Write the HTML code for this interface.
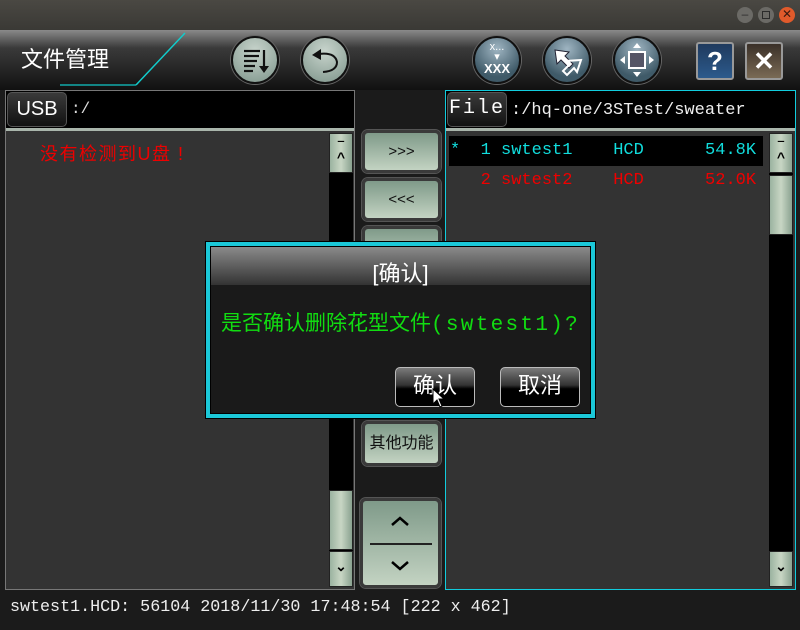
<!DOCTYPE html>
<html><head><meta charset="utf-8"><style>
*{margin:0;padding:0;box-sizing:border-box}
body{width:800px;height:630px;background:#1b1b1b;position:relative;overflow:hidden;font-family:"Liberation Sans","Noto Sans CJK SC",sans-serif}
.a{position:absolute}
.mono{font-family:"Liberation Mono","Noto Sans CJK SC",monospace}
.gbtn{position:absolute;border-radius:6px;background:linear-gradient(#7f9a89,#c3d3c2);border:3px solid #3a3a3a;box-shadow:0 0 0 1px #555;color:#111;text-align:center}
.sb{position:absolute;background:linear-gradient(90deg,#9bb3a0,#c8d6c4 50%,#8aa290);border:1px solid #222}
.circ{position:absolute;width:48px;height:48px;border-radius:50%;border:2px solid #111;box-shadow:0 0 0 1px #666}
.dbtn{position:absolute;border:1px solid #bbb;border-radius:5px;background:linear-gradient(#7a7a7a,#333 45%,#000 55%,#000);color:#fff;font-size:22px;text-align:center;line-height:36px}
</style></head><body>
<div class="a" style="left:0;top:0;width:800px;height:30px;background:linear-gradient(#4a4843,#3a3935)"></div>
<div class="a" style="left:737px;top:7px;width:16px;height:16px;border-radius:50%;background:#6b6a66;color:#2b2b2b;font-size:12px;text-align:center;line-height:15px">–</div>
<div class="a" style="left:758px;top:7px;width:16px;height:16px;border-radius:50%;background:#6b6a66"><div class="a" style="left:4px;top:4px;width:8px;height:8px;border:1px solid #2b2b2b"></div></div>
<div class="a" style="left:779px;top:7px;width:16px;height:16px;border-radius:50%;background:#e05a2b;color:#3a1a10;font-size:12px;text-align:center;line-height:15px">✕</div>
<div class="a" style="left:0;top:30px;width:800px;height:60px;background:linear-gradient(#8a8a8a,#3a3a3a 30%,#111 100%)"></div>
<div class="a" style="left:21px;top:42px;color:#fff;font-size:22px">文件管理</div>
<svg class="a" style="left:0;top:30px" width="200" height="60"><line x1="60" y1="55" x2="136" y2="55" stroke="#1aa" stroke-width="1.5"/><line x1="136" y1="55" x2="185" y2="3" stroke="#1cc" stroke-width="1.5"/></svg>
<div class="circ" style="left:231px;top:36px;background:radial-gradient(circle at 50% 30%,#c8d4cc,#7d948a)">
<svg width="44" height="44"><g stroke="#111" stroke-width="2.2"><line x1="11" y1="13" x2="27" y2="13"/><line x1="11" y1="18" x2="26" y2="18"/><line x1="11" y1="23" x2="24" y2="23"/><line x1="11" y1="28" x2="22" y2="28"/><line x1="11" y1="33" x2="20" y2="33"/><line x1="31" y1="12" x2="31" y2="30"/></g><path d="M26 28 L36 28 L31 35Z" fill="#111"/></svg></div>
<div class="circ" style="left:301px;top:36px;background:radial-gradient(circle at 50% 30%,#c8d4cc,#7d948a)">
<svg width="44" height="44"><path d="M16 16 Q32 14 34 24 Q34 33 20 34" fill="none" stroke="#111" stroke-width="2"/><path d="M9 17 L18 11 L18 22Z" fill="#111"/></svg></div>
<div class="circ" style="left:473px;top:36px;background:radial-gradient(circle at 50% 25%,#9fb5c2,#3f5a68 70%)"><div style="color:#fff;font-size:11px;text-align:center;margin-top:4px;line-height:10px">x...<br>▾</div><div style="color:#fff;font-size:13px;font-weight:bold;text-align:center;line-height:13px">XXX</div></div>
<div class="circ" style="left:543px;top:36px;background:radial-gradient(circle at 50% 25%,#9fb5c2,#3f5a68 70%)"><svg width="44" height="44"><path d="M10 12 L24 14 L20 18 L28 26 L24 30 L16 22 L12 26Z" fill="#fff" stroke="#223" /><path d="M36 22 L32 34 L29 30 L22 37 L18 33 L25 26 L21 23Z" fill="none" stroke="#fff" stroke-width="2"/></svg></div>
<div class="circ" style="left:613px;top:36px;background:radial-gradient(circle at 50% 25%,#9fb5c2,#3f5a68 70%)"><svg width="44" height="44"><rect x="14" y="14" width="16" height="16" fill="#556" stroke="#fff" stroke-width="2"/><path d="M22 5 L26 10 L18 10Z M22 39 L26 34 L18 34Z M5 22 L10 18 L10 26Z M39 22 L34 18 L34 26Z" fill="#fff"/></svg></div>
<div class="a" style="left:696px;top:42px;width:38px;height:38px;border:2px solid #999;border-radius:3px;background:linear-gradient(#1f3a5e,#2c5a8c);color:#fff;font-size:26px;font-weight:bold;text-align:center;line-height:34px">?</div>
<div class="a" style="left:745px;top:42px;width:38px;height:38px;border:2px solid #999;border-radius:3px;background:linear-gradient(#3a3028,#7a6a55);color:#fff;font-size:26px;font-weight:bold;text-align:center;line-height:34px">✕</div>
<div class="a" style="left:5px;top:90px;width:350px;height:500px;border:1px solid #777;background:#333"></div>
<div class="a" style="left:6px;top:91px;width:348px;height:37px;background:#000"></div>
<div class="a" style="left:6px;top:128px;width:348px;height:3px;background:#a9b5ab"></div>
<div class="a" style="left:7px;top:92px;width:60px;height:35px;border:1px solid #555;border-radius:5px;background:linear-gradient(#3a3a3a,#111);color:#fff;font-size:20px;text-align:center;line-height:32px">USB</div>
<div class="a mono" style="left:71px;top:100px;color:#ddd;font-size:16px">:/</div>
<div class="a" style="left:40px;top:140px;color:#e00;font-size:18px;letter-spacing:1.5px;white-space:pre">没有检测到U盘 !</div>
<div class="a" style="left:329px;top:172px;width:24px;height:415px;background:#000"></div>
<div class="sb" style="left:329px;top:133px;width:24px;height:40px"><div style="text-align:center;font-size:14px;font-weight:bold;margin-top:8px;line-height:10px">‾<br>^</div></div>
<div class="sb" style="left:329px;top:490px;width:24px;height:60px"></div>
<div class="sb" style="left:329px;top:551px;width:24px;height:36px"><div style="text-align:center;font-size:14px;margin-top:6px;font-weight:bold">⌄</div></div>
<div class="gbtn" style="left:362px;top:130px;width:79px;height:43px;line-height:37px;font-size:15px">&gt;&gt;&gt;</div>
<div class="gbtn" style="left:362px;top:178px;width:79px;height:43px;line-height:37px;font-size:15px">&lt;&lt;&lt;</div>
<div class="gbtn" style="left:362px;top:226px;width:79px;height:43px"></div>
<div class="gbtn" style="left:362px;top:421px;width:79px;height:45px;line-height:39px;font-size:16px">其他功能</div>
<div class="gbtn" style="left:360px;top:498px;width:81px;height:90px">
<svg width="75" height="84"><path d="M29 24 L37 17 L45 24" fill="none" stroke="#000" stroke-width="2.5"/><line x1="7" y1="43" x2="69" y2="43" stroke="#222" stroke-width="2"/><path d="M29 61 L37 68 L45 61" fill="none" stroke="#000" stroke-width="2.5"/></svg></div>
<div class="a" style="left:445px;top:90px;width:351px;height:500px;border:1px solid #1cd;background:#333"></div>
<div class="a" style="left:446px;top:91px;width:349px;height:37px;background:#000"></div>
<div class="a" style="left:446px;top:128px;width:349px;height:3px;background:#a9b5ab"></div>
<div class="a mono" style="left:447px;top:92px;width:60px;height:35px;border:1px solid #555;border-radius:5px;background:linear-gradient(#3a3a3a,#111);color:#fff;font-size:20px;text-align:center;line-height:32px;letter-spacing:2px">File</div>
<div class="a mono" style="left:511px;top:101px;color:#eee;font-size:17px">:/hq-one/3STest/sweater</div>
<div class="a" style="left:449px;top:136px;width:314px;height:30px;background:#000"></div>
<div class="a mono" style="left:450px;top:141px;color:#1dd;font-size:17px;white-space:pre">*  1 swtest1    HCD      54.8K</div>
<div class="a mono" style="left:450px;top:171px;color:#e00;font-size:17px;white-space:pre">   2 swtest2    HCD      52.0K</div>
<div class="a" style="left:769px;top:172px;width:24px;height:415px;background:#000"></div>
<div class="sb" style="left:769px;top:133px;width:24px;height:40px"><div style="text-align:center;font-size:14px;font-weight:bold;margin-top:8px;line-height:10px">‾<br>^</div></div>
<div class="sb" style="left:769px;top:175px;width:24px;height:60px"></div>
<div class="sb" style="left:769px;top:551px;width:24px;height:36px"><div style="text-align:center;font-size:14px;margin-top:6px;font-weight:bold">⌄</div></div>
<div class="a" style="left:205px;top:241px;width:391px;height:178px;background:#1bc8d8;border:1px solid #000"></div>
<div class="a" style="left:210px;top:246px;width:381px;height:168px;background:#1a1a1a;border:1px solid #000"></div>
<div class="a" style="left:211px;top:247px;width:379px;height:38px;background:linear-gradient(#8a8a8a,#333)"></div>
<div class="a" style="left:211px;top:256px;width:379px;text-align:center;color:#fff;font-size:22px">[确认]</div>
<div class="a" style="left:221px;top:307px;color:#1d1;font-size:21px;white-space:nowrap">是否确认删除花型文件<span class="mono" style="letter-spacing:2.3px">(swtest1)?</span></div>
<div class="dbtn" style="left:395px;top:367px;width:80px;height:40px">确认</div>
<div class="dbtn" style="left:500px;top:367px;width:80px;height:40px">取消</div>
<svg class="a" style="left:432px;top:388px" width="14" height="22"><path d="M1 1 L1 16 L5 12 L8 19 L10 18 L7 11 L12 11Z" fill="#fff" stroke="#000"/></svg>
<div class="a mono" style="left:10px;top:598px;color:#eee;font-size:16.7px;white-space:pre">swtest1.HCD: 56104 2018/11/30 17:48:54 [222 x 462]</div>
</body></html>
